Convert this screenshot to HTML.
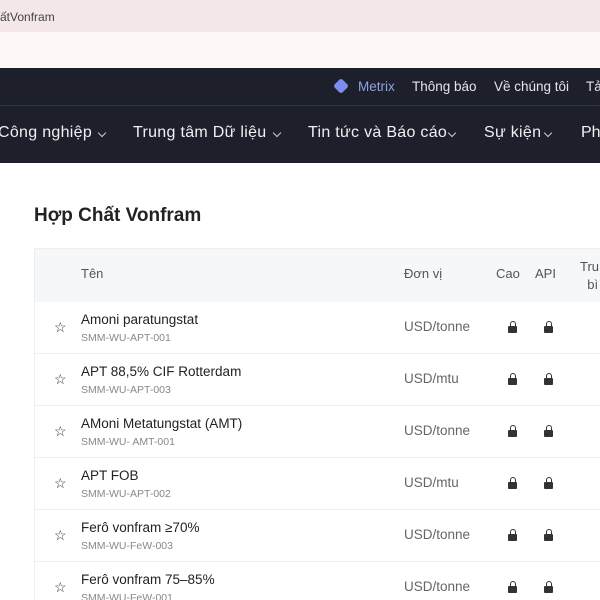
<!DOCTYPE html>
<html><head><meta charset="utf-8"><style>
*{margin:0;padding:0;box-sizing:border-box}
html,body{width:600px;height:600px;overflow:hidden}
body{background:#fff;font-family:"Liberation Sans",sans-serif;position:relative}
.a{position:absolute;white-space:nowrap}
.lock{position:absolute;width:9px;height:7px;background:#333;border-radius:1px}
.lock:before{content:"";position:absolute;left:1.5px;top:-5px;width:6px;height:6px;border:1.6px solid #333;border-bottom:none;border-radius:3px 3px 0 0;box-sizing:border-box}
.row{position:absolute;left:34px;width:566px;height:52px;border-bottom:1px solid #eceef2}
.n{position:absolute;left:47px;top:10px;font-size:13.5px;color:#222}
.c{position:absolute;left:47px;top:30px;font-size:10.5px;color:#888}
.u{position:absolute;left:370px;top:17px;font-size:13.5px;color:#666}
.st{position:absolute;left:20px;top:17px;font-size:14px;color:#333}
.nv{position:absolute;top:124px;font-size:16px;color:#f0f0f2;white-space:nowrap}
.ch{position:absolute;top:130px;width:6px;height:6px;border-right:1.3px solid #ccc;border-bottom:1.3px solid #ccc;transform:rotate(45deg)}
</style></head><body>
<div class="a" style="left:0;top:0;width:600px;height:32px;background:#f3e7e9"></div>
<div class="a" style="left:0;top:10px;font-size:12px;color:#444">ấtVonfram</div>
<div class="a" style="left:0;top:32px;width:600px;height:36px;background:#fdf8f7"></div>
<div class="a" style="left:0;top:68px;width:600px;height:95px;background:#1d202b"></div>
<div class="a" style="left:0;top:105px;width:600px;height:1px;background:#2f3340"></div>
<div class="a" style="left:334px;top:79px;width:14px;height:14px;background:#7d8cf0;transform:rotate(45deg) scale(.8);border-radius:3px"></div>
<div class="a" style="left:358px;top:79px;font-size:13.5px;color:#8ea0e8">Metrix</div>
<div class="a" style="left:412px;top:79px;font-size:13.5px;color:#e4e4e8">Thông báo</div>
<div class="a" style="left:494px;top:79px;font-size:13.5px;color:#e4e4e8">Về chúng tôi</div>
<div class="a" style="left:586px;top:79px;font-size:13.5px;color:#e4e4e8">Tả</div>
<div class="nv" style="left:-2px;letter-spacing:0.3px">Công nghiệp</div><i class="ch" style="left:99px"></i>
<div class="nv" style="left:133px;letter-spacing:0.3px">Trung tâm Dữ liệu</div><i class="ch" style="left:274px"></i>
<div class="nv" style="left:308px;letter-spacing:0.3px">Tin tức và Báo cáo</div><i class="ch" style="left:449px"></i>
<div class="nv" style="left:484px;letter-spacing:0.3px">Sự kiện</div><i class="ch" style="left:545px"></i>
<div class="nv" style="left:581px">Ph</div>
<div class="a" style="left:34px;top:205px;font-size:19px;font-weight:bold;color:#222">Hợp Chất Vonfram</div>
<div class="a" style="left:34px;top:248px;width:566px;height:54px;background:#f6f7f9;border-top:1px solid #eceef2"></div>
<div class="a" style="left:81px;top:266px;font-size:13px;color:#555">Tên</div>
<div class="a" style="left:404px;top:266px;font-size:13px;color:#555">Đơn vị</div>
<div class="a" style="left:496px;top:266px;font-size:13px;color:#555">Cao</div>
<div class="a" style="left:535px;top:266px;font-size:13px;color:#555">API</div>
<div class="a" style="left:580px;top:258px;font-size:13px;color:#555;line-height:18px">Tru<br>&nbsp;&nbsp;bì</div>
<div class="a" style="left:34px;top:248px;width:1px;height:352px;background:#eceef2"></div>

<div class="row" style="top:302px"><span class="st">☆</span><div class="n">Amoni paratungstat</div><div class="c">SMM-WU-APT-001</div><div class="u">USD/tonne</div><i class="lock" style="left:474px;top:24px"></i><i class="lock" style="left:510px;top:24px"></i></div>
<div class="row" style="top:354px"><span class="st">☆</span><div class="n">APT 88,5% CIF Rotterdam</div><div class="c">SMM-WU-APT-003</div><div class="u">USD/mtu</div><i class="lock" style="left:474px;top:24px"></i><i class="lock" style="left:510px;top:24px"></i></div>
<div class="row" style="top:406px"><span class="st">☆</span><div class="n">AMoni Metatungstat (AMT)</div><div class="c">SMM-WU- AMT-001</div><div class="u">USD/tonne</div><i class="lock" style="left:474px;top:24px"></i><i class="lock" style="left:510px;top:24px"></i></div>
<div class="row" style="top:458px"><span class="st">☆</span><div class="n">APT FOB</div><div class="c">SMM-WU-APT-002</div><div class="u">USD/mtu</div><i class="lock" style="left:474px;top:24px"></i><i class="lock" style="left:510px;top:24px"></i></div>
<div class="row" style="top:510px"><span class="st">☆</span><div class="n">Ferô vonfram ≥70%</div><div class="c">SMM-WU-FeW-003</div><div class="u">USD/tonne</div><i class="lock" style="left:474px;top:24px"></i><i class="lock" style="left:510px;top:24px"></i></div>
<div class="row" style="top:562px"><span class="st">☆</span><div class="n">Ferô vonfram 75–85%</div><div class="c">SMM-WU-FeW-001</div><div class="u">USD/tonne</div><i class="lock" style="left:474px;top:24px"></i><i class="lock" style="left:510px;top:24px"></i></div>
</body></html>
